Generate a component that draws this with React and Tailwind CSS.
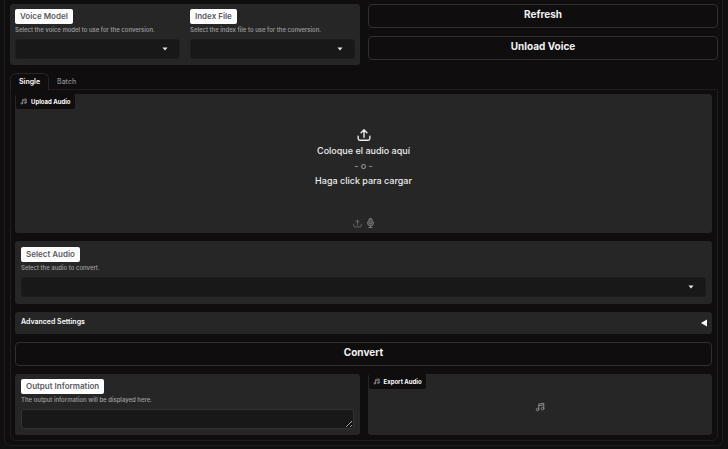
import { useState } from "react";

const TABS = ["Single", "Batch"];

export default function App() {
  const [tab, setTab] = useState("Single");
  const [open, setOpen] = useState(false);

  return (
    <div className="min-h-screen bg-[#101011] pr-[5px] pb-1 pl-1 font-['Inter',sans-serif] text-white">
      <main className="rounded-b-md border border-t-0 border-[#1f1e1f] bg-[#0f0d0e] px-1 pt-1 pb-1">
        <div className="grid grid-cols-2 gap-2 pl-px">
          <div className="grid grid-cols-2 gap-[10px] rounded-[3px] bg-[#262626] px-[5px] pt-[5px] pb-[6px]">
            <SelectField id="voice-model" label="Voice Model" info="Select the voice model to use for the conversion." />
            <SelectField id="index-file" label="Index File" info="Select the index file to use for the conversion." />
          </div>
          <div className="flex flex-col gap-2">
            <ActionButton>Refresh</ActionButton>
            <ActionButton>Unload Voice</ActionButton>
          </div>
        </div>

        <div className="mt-2 pl-px">
          <div role="tablist" className="flex h-4">
            {TABS.map((name) => (
              <button
                key={name}
                role="tab"
                aria-selected={tab === name}
                onClick={() => setTab(name)}
                className={
                  tab === name
                    ? "-mb-px rounded-t-md border border-b-0 border-[#262526] bg-[#0f0d0e] px-2 text-[7px] leading-4 font-semibold text-white"
                    : "-mb-px px-2 text-[7px] leading-4 font-medium text-[#8d8d8f]"
                }
              >
                {name}
              </button>
            ))}
          </div>

          <div role="tabpanel" className="flex flex-col gap-2 rounded-b-md border border-[#1f1e1f] pt-1 pr-[5px] pb-[5px] pl-1">
            <section className="flex flex-col rounded-[3px] bg-[#262626] pb-[5px]">
              <BlockLabel>Upload Audio</BlockLabel>
              <button className="flex flex-col items-center pt-[18px] text-[9px] leading-[15px] font-medium text-[#ededed]">
                <UploadIcon className="mb-px size-[14px]" />
                <span>Coloque el audio aquí</span>
                <span className="text-[#9b9b9b]">- o -</span>
                <span>Haga click para cargar</span>
              </button>
              <div className="flex items-center justify-center gap-1 pt-[30px]">
                <button aria-label="Upload file" className="text-[#6c6c6c]">
                  <UploadIcon className="size-[9px]" />
                </button>
                <button aria-label="Record audio" className="text-[#8a8a8a]">
                  <MicIcon />
                </button>
              </div>
            </section>

            <section className="rounded-[3px] bg-[#262626] px-[6px] pt-[6px] pb-[7px]">
              <SelectField id="select-audio" label="Select Audio" info="Select the audio to convert." />
            </section>

            <section className="rounded-[3px] bg-[#262626]">
              <button
                aria-expanded={open}
                onClick={() => setOpen(!open)}
                className="flex h-[22px] w-full items-center justify-between pr-[5px] pb-px pl-[6px] text-[7px] font-semibold"
              >
                Advanced Settings
                <svg viewBox="0 0 6 8" className={open ? "h-2 w-[6px] -rotate-90" : "h-2 w-[6px]"}>
                  <path d="M6 0.5v7L0 4z" fill="currentColor" />
                </svg>
              </button>
            </section>

            <ActionButton>Convert</ActionButton>

            <div className="grid grid-cols-2 gap-2">
              <section className="rounded-[3px] bg-[#262626] px-[6px] pt-[5px] pb-[6px]">
                <FieldLabel id="output-info" label="Output Information" info="The output information will be displayed here." />
                <textarea
                  id="output-info"
                  readOnly
                  rows={1}
                  className="block h-5 w-full resize rounded-[3px] border border-[#333333] bg-[#181818] px-1 text-[7px] [color-scheme:dark]"
                />
              </section>
              <section className="flex flex-col rounded-[3px] bg-[#262626]">
                <BlockLabel>Export Audio</BlockLabel>
                <div className="flex flex-1 items-center justify-center pb-[11px] text-[#8a8a8a]">
                  <MusicIcon className="size-[10px]" />
                </div>
              </section>
            </div>
          </div>
        </div>
      </main>
    </div>
  );
}

function FieldLabel({ id, label, info }) {
  return (
    <div className="mb-1 flex flex-col items-start">
      <label htmlFor={id} className="mb-px h-[15px] rounded-[2px] bg-white px-[5px] text-[8px] leading-[14px] font-semibold text-[#5a5a5c]">
        {label}
      </label>
      <p className="text-[6px] leading-[10px] font-medium whitespace-nowrap text-[#a0a0a2]">{info}</p>
    </div>
  );
}

function SelectField({ id, label, info }) {
  return (
    <div>
      <FieldLabel id={id} label={label} info={info} />
      <div className="grid items-center">
        <select id={id} className="col-start-1 row-start-1 h-5 w-full appearance-none rounded-[3px] border border-[#1e1e1e] bg-[#181818] px-2 text-[7px]" />
        <svg viewBox="0 0 6 4" className="pointer-events-none col-start-1 row-start-1 mr-3 h-1 w-[6px] justify-self-end">
          <path d="M0.5 0.5h5L3 3.5z" fill="#e8e8e8" />
        </svg>
      </div>
    </div>
  );
}

function ActionButton({ children }) {
  return (
    <button className="h-6 w-full rounded-[4px] border border-[#303031] bg-[#0f0d0e] pb-[5px] text-[10px] leading-4 font-bold text-[#f2f2f2]">
      {children}
    </button>
  );
}

function BlockLabel({ children }) {
  return (
    <h2 className="mb-px ml-px flex h-[15px] items-center gap-1 self-start rounded-[2px] bg-[#0f0d0e] px-1 pb-px text-[6px] font-bold">
      <MusicIcon className="size-[7px] text-[#9a9a9a]" />
      {children}
    </h2>
  );
}

function UploadIcon({ className }) {
  return (
    <svg viewBox="0 0 24 24" fill="none" stroke="currentColor" strokeWidth="2.4" strokeLinecap="round" strokeLinejoin="round" className={className}>
      <path d="M12 16V3M7 8l5-5 5 5M2 14v4a3 3 0 0 0 3 3h14a3 3 0 0 0 3-3v-4" />
    </svg>
  );
}

function MicIcon() {
  return (
    <svg viewBox="0 0 20 24" fill="none" stroke="currentColor" strokeWidth="2" strokeLinecap="round" className="h-[10px] w-[9px]">
      <rect x="6" y="1" width="8" height="14" rx="4" fill="currentColor" fillOpacity="0.4" />
      <path d="M3 10v2a7 7 0 0 0 14 0v-2M10 19v4M6 23h8" />
    </svg>
  );
}

function MusicIcon({ className }) {
  return (
    <svg viewBox="0 0 24 24" fill="none" stroke="currentColor" strokeWidth="2.4" strokeLinecap="round" strokeLinejoin="round" className={className}>
      <path d="M9 18V5l12-2v13M9 9l12-2" />
      <circle cx="6" cy="18" r="3" />
      <circle cx="18" cy="16" r="3" />
    </svg>
  );
}
